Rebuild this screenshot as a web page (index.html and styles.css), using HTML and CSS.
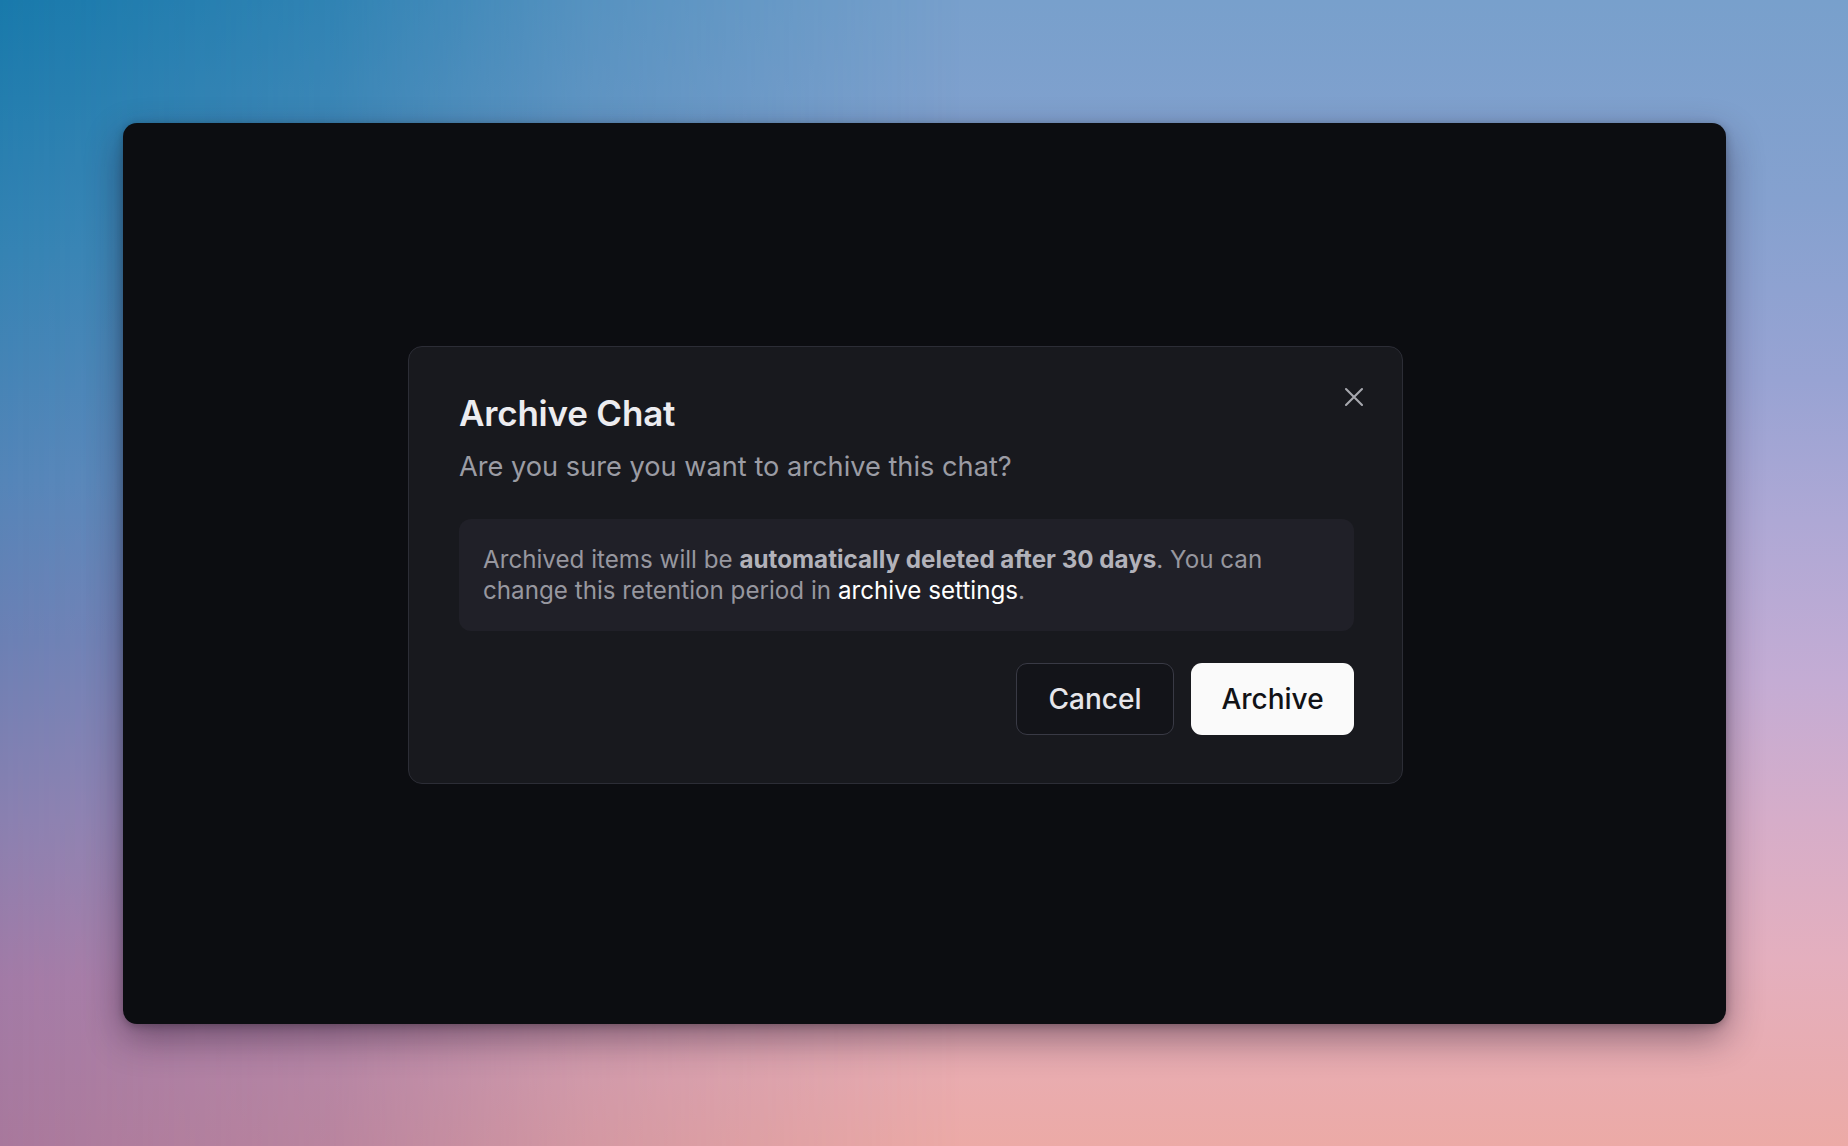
FILE: index.html
```html
<!DOCTYPE html>
<html lang="en">
<head>
<meta charset="utf-8">
<title>Archive Chat</title>
<link rel="stylesheet" href="styles.css">
</head>
<body>
<div class="stage">
  <div class="window">
    <div class="dialog" role="dialog" aria-labelledby="dlg-title">
      <button class="close" aria-label="Close">
        <svg viewBox="0 0 20 20" width="20" height="20" fill="none" stroke="currentColor" stroke-width="2.1" stroke-linecap="round">
          <path d="M2 2 L18 18 M18 2 L2 18"/>
        </svg>
      </button>
      <h2 class="title" id="dlg-title">Archive Chat</h2>
      <p class="subtitle">Are you sure you want to archive this chat?</p>
      <div class="notice">
        <p class="notice-text">Archived items will be <strong>automatically deleted after 30 days</strong>. You can change this retention period in <a class="link" href="#">archive settings</a>.</p>
      </div>
      <div class="actions">
        <button class="btn btn-cancel">Cancel</button>
        <button class="btn btn-archive">Archive</button>
      </div>
    </div>
  </div>
</div>
</body>
</html>
```

FILE: styles.css
```css
* { box-sizing: border-box; }

html, body {
  margin: 0;
  padding: 0;
  height: 100%;
}

body {
  font-family: Inter, "Noto Sans", "Liberation Sans", sans-serif;
  background: linear-gradient(to bottom,
    #78a0cc 0px,
    #85a1cf 200px,
    #98a3d3 380px,
    #aea8d5 520px,
    #c4acd4 680px,
    #d6adc9 820px,
    #e4afbe 960px,
    #ecaaa6 1146px);
  position: relative;
  overflow: hidden;
}

body::before {
  content: "";
  position: absolute;
  inset: 0;
  background: linear-gradient(to bottom,
    #1879ab 0px,
    #3483b3 250px,
    #5485b8 480px,
    #6b80b4 640px,
    #8a80b0 820px,
    #a27aa6 980px,
    #a8789c 1146px);
  -webkit-mask-image: linear-gradient(to right, #000 0%, rgba(0,0,0,0.75) 18%, rgba(0,0,0,0.35) 32%, transparent 52%);
  mask-image: linear-gradient(to right, #000 0%, rgba(0,0,0,0.75) 18%, rgba(0,0,0,0.35) 32%, transparent 52%);
}

.stage {
  position: relative;
  z-index: 1;
  height: 1146px;
  display: flex;
  align-items: center;
  justify-content: center;
}

.window {
  width: 1603px;
  height: 901px;
  background: #0c0d11;
  border-radius: 14px;
  box-shadow: 0 14px 36px rgba(30, 15, 40, 0.45), 0 2px 8px rgba(0, 0, 0, 0.25);
  display: flex;
  align-items: center;
  justify-content: center;
  padding-right: 37px;
  padding-bottom: 16px;
}

.dialog {
  position: relative;
  width: 995px;
  background: #18191e;
  border: 1px solid #2c2d36;
  border-radius: 14px;
  padding: 45px 48px 48px 50px;
}

.close {
  position: absolute;
  top: 40px;
  right: 38px;
  width: 20px;
  height: 20px;
  padding: 0;
  border: 0;
  background: none;
  color: #a7a8af;
  display: flex;
  cursor: pointer;
}

.title {
  margin: 0;
  font-size: 35px;
  line-height: 42px;
  font-weight: 600;
  color: #ececf0;
  letter-spacing: -0.2px;
}

.subtitle {
  margin: 15px 0 0;
  font-size: 27.2px;
  line-height: 36px;
  font-weight: 400;
  color: #9b9ca4;
}

.notice {
  margin-top: 34px;
  background: #202028;
  border-radius: 12px;
  padding: 25px 24px;
}

.notice-text {
  margin: 0;
  font-size: 24.2px;
  line-height: 31px;
  color: #97979f;
}

.notice-text strong {
  font-weight: 700;
  color: #b2b2ba;
}

.link {
  color: #ffffff;
  font-weight: 400;
  text-decoration: none;
}

.actions {
  margin-top: 32px;
  display: flex;
  justify-content: flex-end;
  gap: 17px;
}

.btn {
  height: 72px;
  border-radius: 11px;
  font-family: Inter, "Noto Sans", "Liberation Sans", sans-serif;
  font-size: 28px;
  font-weight: 500;
  cursor: pointer;
  display: flex;
  align-items: center;
  justify-content: center;
}

.btn-cancel {
  width: 158px;
  background: #131419;
  border: 1.5px solid #393a45;
  color: #e6e6ea;
}

.btn-archive {
  width: 163px;
  background: #fafafa;
  border: 0;
  color: #111216;
}
```
